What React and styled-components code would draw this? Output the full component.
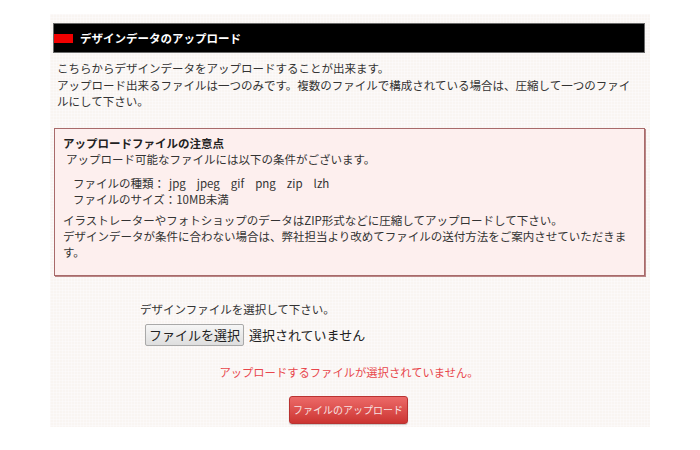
import React from "react";
import styled, { createGlobalStyle } from "styled-components";

const Global = createGlobalStyle`
  html, body { margin: 0; padding: 0; background: #ffffff; }
  body {
    font-family: "Noto Sans CJK JP", "Noto Sans", sans-serif;
    color: #333333;
  }
  * { box-sizing: border-box; }
`;

const Panel = styled.section`
  margin: 14px 0 0 50px;
  width: 600px;
  height: 413px;
  padding: 9px 5px 0 3px;
  background-color: #f9f5f2;
  background-image:
    linear-gradient(rgba(255,255,255,0.35) 1px, transparent 1px),
    linear-gradient(90deg, rgba(255,255,255,0.35) 1px, transparent 1px);
  background-size: 3px 3px;
  display: flex;
  flex-direction: column;
`;

const Header = styled.h2`
  margin: 0;
  height: 30px;
  background: #000;
  border: 1px solid #6a6a6a;
  display: flex;
  align-items: center;
  gap: 7px;
  color: #fff;
  font-size: 11.5px;
  font-weight: 700;
  letter-spacing: 0;
`;

const RedMark = styled.span`
  width: 19px;
  height: 9px;
  background: #f00000;
  flex: none;
`;

const Intro = styled.p`
  margin: 7px 0 0 4px;
  width: 586px;
  font-size: 11.5px;
  line-height: 16.5px;
  color: #333;
`;

const Notice = styled.div`
  margin: 18px 0 0 1px;
  width: 591px;
  height: 148px;
  background: #fdefee;
  border: 1px solid #a86a6a;
  box-shadow: 1px 1px 0 #b98585;
  padding: 6px 14px 0 8px;
  font-size: 11.5px;
  line-height: 16px;
`;

const NoticeTitle = styled.div`
  font-weight: 700;
  color: #222;
`;

const NoticeLine = styled.div`
  padding-left: ${(p) => p.$indent || 0}px;
  margin-top: ${(p) => p.$gap || 0}px;
`;

const FileTypes = styled.span`
  display: inline-flex;
  gap: 11px;
  margin-left: 4px;
`;

const Form = styled.div`
  margin: 25px 0 0 87px;
  display: flex;
  flex-direction: column;
  align-items: flex-start;
  font-size: 11.5px;
  line-height: 16px;
`;

const FileRow = styled.div`
  margin-top: 7px;
  margin-left: 5px;
  display: flex;
  align-items: center;
  gap: 5px;
  font-size: 13px;
`;

const ChooseButton = styled.button`
  height: 22px;
  width: 99px;
  padding: 0;
  font-family: inherit;
  font-size: 13px;
  color: #222;
  background: linear-gradient(#f6f6f6, #dedede);
  border: 1px solid #a9a9a9;
  border-radius: 2px;
`;

const Status = styled.span`
  color: #222;
`;

const ErrorText = styled.p`
  margin: 18px 0 0;
  text-align: center;
  font-size: 11.3px;
  line-height: 16px;
  color: #e8464b;
`;

const UploadButton = styled.button`
  align-self: center;
  margin: 16px 0 0 -2px;
  width: 119px;
  height: 28px;
  padding: 0;
  white-space: nowrap;
  font-family: inherit;
  font-size: 10px;
  color: #f7e3e3;
  background: linear-gradient(#ec6a68, #cc3532);
  border: 1px solid #b93331;
  border-radius: 3px;
  box-shadow: 0 1px 1px rgba(0,0,0,0.2);
`;

export default function App() {
  return (
    <>
      <Global />
      <Panel>
        <Header>
          <RedMark />
          デザインデータのアップロード
        </Header>
        <Intro>
          こちらからデザインデータをアップロードすることが出来ます。
          <br />
          アップロード出来るファイルは一つのみです。複数のファイルで構成されている場合は、圧縮して一つのファイ
          <br />
          ルにして下さい。
        </Intro>
        <Notice>
          <NoticeTitle>アップロードファイルの注意点</NoticeTitle>
          <NoticeLine $indent={3}>アップロード可能なファイルには以下の条件がございます。</NoticeLine>
          <NoticeLine $indent={10} $gap={8}>
            ファイルの種類：
            <FileTypes>
              <span>jpg</span>
              <span>jpeg</span>
              <span>gif</span>
              <span>png</span>
              <span>zip</span>
              <span>lzh</span>
            </FileTypes>
          </NoticeLine>
          <NoticeLine $indent={10}>ファイルのサイズ：10MB未満</NoticeLine>
          <NoticeLine $gap={5}>
            イラストレーターやフォトショップのデータはZIP形式などに圧縮してアップロードして下さい。
            <br />
            デザインデータが条件に合わない場合は、弊社担当より改めてファイルの送付方法をご案内させていただきます。
          </NoticeLine>
        </Notice>
        <Form>
          <span>デザインファイルを選択して下さい。</span>
          <FileRow>
            <ChooseButton type="button">ファイルを選択</ChooseButton>
            <Status>選択されていません</Status>
          </FileRow>
        </Form>
        <ErrorText>アップロードするファイルが選択されていません。</ErrorText>
        <UploadButton type="button">ファイルのアップロード</UploadButton>
      </Panel>
    </>
  );
}
